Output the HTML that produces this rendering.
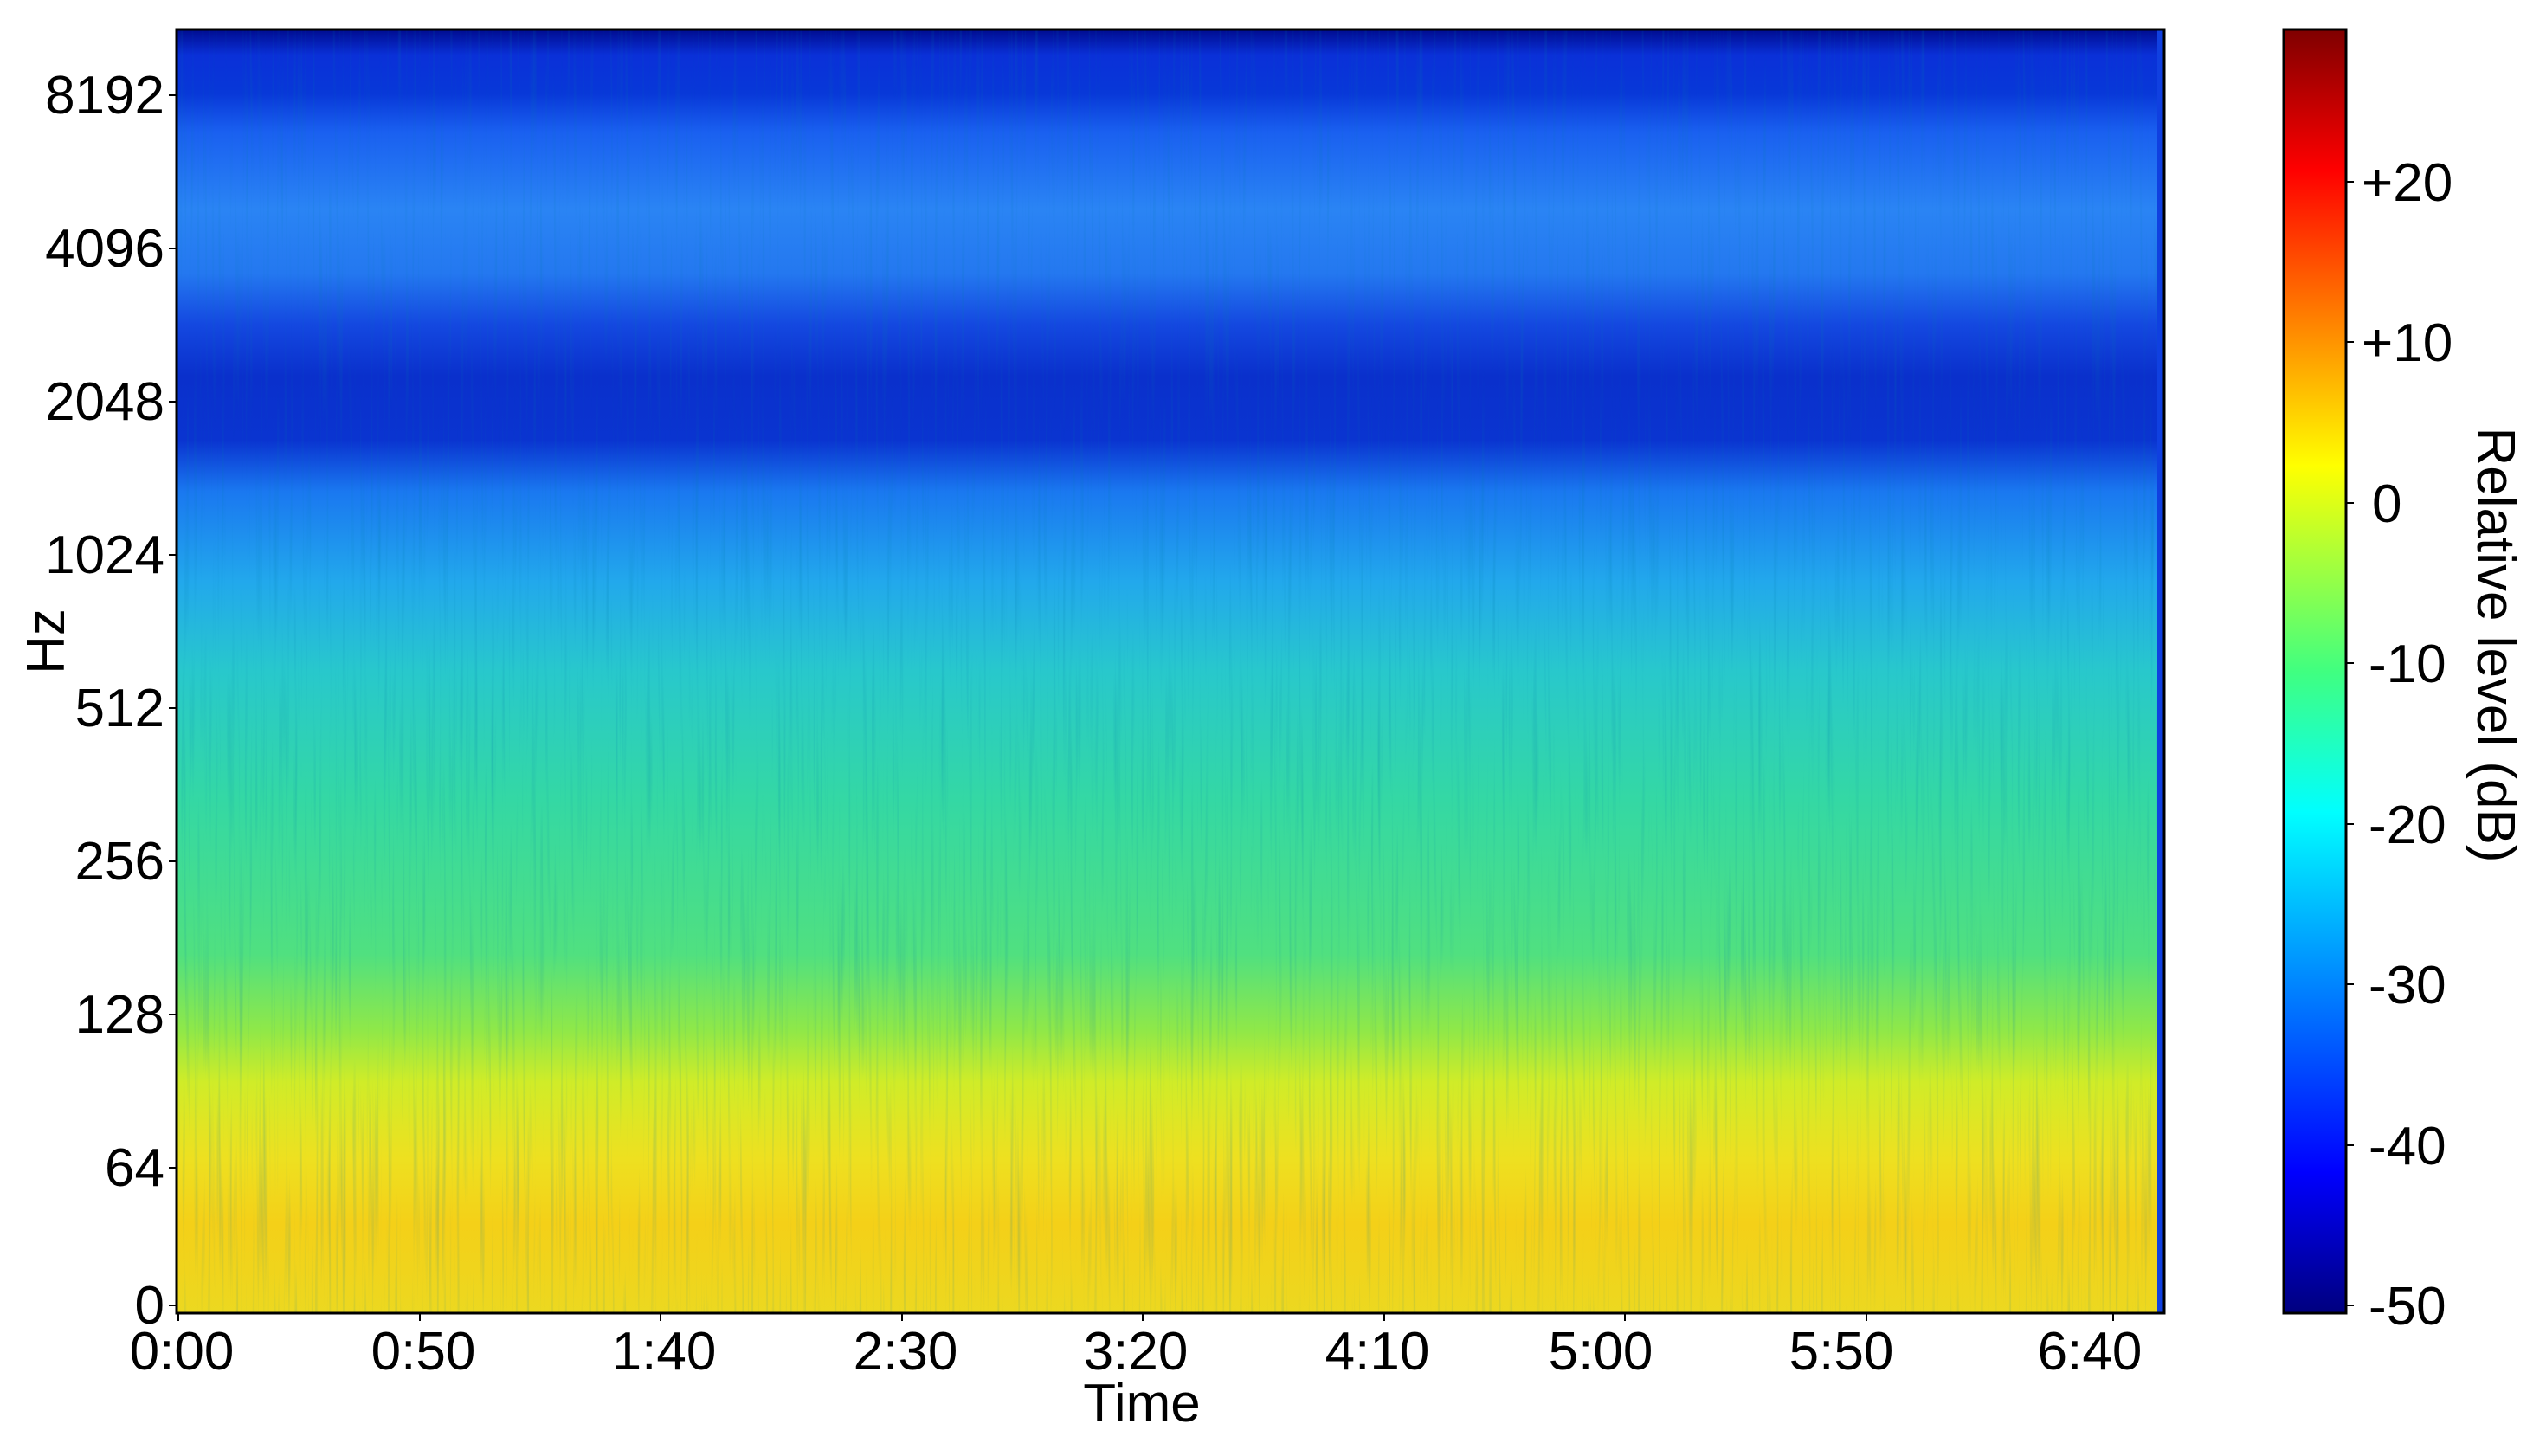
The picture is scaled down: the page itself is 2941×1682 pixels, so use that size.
<!DOCTYPE html>
<html><head><meta charset="utf-8"><style>
html,body{margin:0;padding:0;background:#fff;width:2941px;height:1682px;overflow:hidden}
svg text{font-family:"Liberation Sans",Arial,sans-serif;fill:#000}
</style></head><body>
<svg width="2941" height="1682" viewBox="0 0 2941 1682" xmlns="http://www.w3.org/2000/svg">
<defs>
<linearGradient id="spec" x1="0" y1="0" x2="0" y2="1">
<stop offset="0" stop-color="#000c90"/>
<stop offset="0.02" stop-color="#0a30d8"/>
<stop offset="0.05" stop-color="#0838d8"/>
<stop offset="0.08" stop-color="#1a60f0"/>
<stop offset="0.14" stop-color="#2a84f4"/>
<stop offset="0.19" stop-color="#2478f0"/>
<stop offset="0.23" stop-color="#1448e0"/>
<stop offset="0.27" stop-color="#0a30cc"/>
<stop offset="0.32" stop-color="#0a34d0"/>
<stop offset="0.36" stop-color="#1a78f0"/>
<stop offset="0.43" stop-color="#22a8ec"/>
<stop offset="0.50" stop-color="#28c8cc"/>
<stop offset="0.60" stop-color="#34d8a4"/>
<stop offset="0.72" stop-color="#50e080"/>
<stop offset="0.78" stop-color="#90e848"/>
<stop offset="0.82" stop-color="#d0ec28"/>
<stop offset="0.88" stop-color="#eee020"/>
<stop offset="0.93" stop-color="#f4d018"/>
<stop offset="1" stop-color="#ecd820"/>
</linearGradient>
<linearGradient id="jet" x1="0" y1="0" x2="0" y2="1">
<stop offset="0" stop-color="#7f0000"/>
<stop offset="0.11" stop-color="#ff0000"/>
<stop offset="0.34" stop-color="#ffff00"/>
<stop offset="0.5" stop-color="#40ff80"/>
<stop offset="0.61" stop-color="#00ffff"/>
<stop offset="0.89" stop-color="#0000ff"/>
<stop offset="1" stop-color="#00007f"/>
</linearGradient>
<filter id="streak" x="0" y="0" width="100%" height="100%">
<feTurbulence type="fractalNoise" baseFrequency="0.25 0.004" numOctaves="2" seed="3"/>
<feColorMatrix type="matrix" values="0 0 0 0 0  0 0 0 0 0.2  0 0 0 0 0.4  0 0 0 1.6 -0.85"/>
</filter>
</defs>
<rect x="204" y="34" width="2296" height="1483" fill="url(#spec)"/>
<rect x="204" y="34" width="2296" height="1483" filter="url(#streak)" opacity="0.35"/>
<rect x="2492" y="34" width="8" height="1483" fill="#1040e0"/>
<rect x="204" y="34" width="2296" height="1483" fill="none" stroke="#000" stroke-width="3"/>
<g stroke="#000" stroke-width="2">
<line x1="195" y1="110" x2="204" y2="110"/><line x1="195" y1="287" x2="204" y2="287"/>
<line x1="195" y1="464" x2="204" y2="464"/><line x1="195" y1="641" x2="204" y2="641"/>
<line x1="195" y1="818" x2="204" y2="818"/><line x1="195" y1="995" x2="204" y2="995"/>
<line x1="195" y1="1172" x2="204" y2="1172"/><line x1="195" y1="1349" x2="204" y2="1349"/>
<line x1="195" y1="1508" x2="204" y2="1508"/>
</g>
<g font-size="62" text-anchor="end">
<text x="190" y="131">8192</text><text x="190" y="308">4096</text>
<text x="190" y="485">2048</text><text x="190" y="662">1024</text>
<text x="190" y="839">512</text><text x="190" y="1016">256</text>
<text x="190" y="1193">128</text><text x="190" y="1370">64</text>
<text x="190" y="1529">0</text>
</g>
<g stroke="#000" stroke-width="2">
<line x1="206" y1="1517" x2="206" y2="1526"/><line x1="485" y1="1517" x2="485" y2="1526"/>
<line x1="763" y1="1517" x2="763" y2="1526"/><line x1="1042" y1="1517" x2="1042" y2="1526"/>
<line x1="1320" y1="1517" x2="1320" y2="1526"/><line x1="1599" y1="1517" x2="1599" y2="1526"/>
<line x1="1877" y1="1517" x2="1877" y2="1526"/><line x1="2156" y1="1517" x2="2156" y2="1526"/>
<line x1="2441" y1="1517" x2="2441" y2="1526"/>
</g>
<g font-size="62" text-anchor="middle">
<text x="210" y="1582">0:00</text><text x="489" y="1582">0:50</text>
<text x="767" y="1582">1:40</text><text x="1046" y="1582">2:30</text>
<text x="1312" y="1582">3:20</text><text x="1591" y="1582">4:10</text>
<text x="1849" y="1582">5:00</text><text x="2127" y="1582">5:50</text>
<text x="2414" y="1582">6:40</text>
<text x="1319" y="1642">Time</text>
</g>
<text x="0" y="0" font-size="62" text-anchor="middle" transform="translate(74,741) rotate(-90)">Hz</text>
<rect x="2638" y="34" width="72" height="1483" fill="url(#jet)" stroke="#000" stroke-width="3"/>
<g stroke="#000" stroke-width="2">
<line x1="2710" y1="210" x2="2719" y2="210"/><line x1="2710" y1="395" x2="2719" y2="395"/>
<line x1="2710" y1="581" x2="2719" y2="581"/><line x1="2710" y1="766" x2="2719" y2="766"/>
<line x1="2710" y1="952" x2="2719" y2="952"/><line x1="2710" y1="1137" x2="2719" y2="1137"/>
<line x1="2710" y1="1323" x2="2719" y2="1323"/><line x1="2710" y1="1508" x2="2719" y2="1508"/>
</g>
<g font-size="62">
<text x="2728" y="232">+20</text><text x="2728" y="417">+10</text>
<text x="2740" y="603">0</text><text x="2736" y="788">-10</text>
<text x="2736" y="974">-20</text><text x="2736" y="1159">-30</text>
<text x="2736" y="1345">-40</text><text x="2736" y="1530">-50</text>
</g>
<text x="0" y="0" font-size="62" text-anchor="middle" transform="translate(2862,745) rotate(90)">Relative level (dB)</text>
</svg>
</body></html>
